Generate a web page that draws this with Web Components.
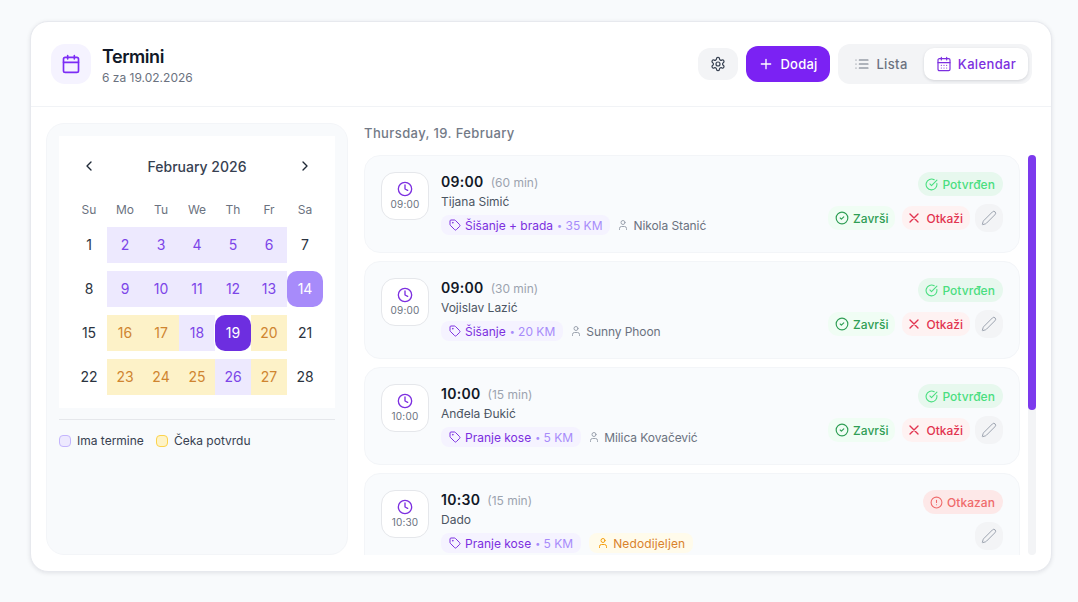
<!DOCTYPE html>
<html lang="bs">
<head>
<meta charset="utf-8">
<title>Termini</title>
<style>
html,body{margin:0;height:100%}
body{background:#f8fafc;font-family:Inter,"Liberation Sans",sans-serif;color:#111827;overflow:hidden}
</style>
</head>
<body>
<termini-app>
  <termini-header slot="header" title-text="Termini" sub="6 za 19.02.2026"></termini-header>
  <mini-calendar slot="side"></mini-calendar>
  <span slot="date">Thursday, 19. February</span>
  <appt-card slot="list" time="09:00" dur="(60 min)" name="Tijana Simić" service="Šišanje + brada" price="35 KM" staff="Nikola Stanić" status="ok"></appt-card>
  <appt-card slot="list" time="09:00" dur="(30 min)" name="Vojislav Lazić" service="Šišanje" price="20 KM" staff="Sunny Phoon" status="ok"></appt-card>
  <appt-card slot="list" time="10:00" dur="(15 min)" name="Anđela Đukić" service="Pranje kose" price="5 KM" staff="Milica Kovačević" status="ok"></appt-card>
  <appt-card slot="list" time="10:30" dur="(15 min)" name="Dado" service="Pranje kose" price="5 KM" staff="Nedodijeljen" status="no" unassigned></appt-card>
</termini-app>
<script>
const P={
 calendar:'<path d="M8 2v4M16 2v4"/><rect x="3" y="4" width="18" height="18" rx="2"/><path d="M3 10h18"/>',
 days:'<path d="M8 2v4M16 2v4"/><rect x="3" y="4" width="18" height="18" rx="2"/><path d="M3 10h18M8 14h.01M12 14h.01M16 14h.01M8 18h.01M12 18h.01M16 18h.01"/>',
 gear:'<path d="M12.22 2h-.44a2 2 0 0 0-2 2v.18a2 2 0 0 1-1 1.73l-.43.25a2 2 0 0 1-2 0l-.15-.08a2 2 0 0 0-2.73.73l-.22.38a2 2 0 0 0 .73 2.73l.15.1a2 2 0 0 1 1 1.72v.51a2 2 0 0 1-1 1.74l-.15.09a2 2 0 0 0-.73 2.73l.22.38a2 2 0 0 0 2.73.73l.15-.08a2 2 0 0 1 2 0l.43.25a2 2 0 0 1 1 1.73V20a2 2 0 0 0 2 2h.44a2 2 0 0 0 2-2v-.18a2 2 0 0 1 1-1.73l.43-.25a2 2 0 0 1 2 0l.15.08a2 2 0 0 0 2.73-.73l.22-.39a2 2 0 0 0-.73-2.73l-.15-.08a2 2 0 0 1-1-1.74v-.5a2 2 0 0 1 1-1.74l.15-.09a2 2 0 0 0 .73-2.73l-.22-.38a2 2 0 0 0-2.73-.73l-.15.08a2 2 0 0 1-2 0l-.43-.25a2 2 0 0 1-1-1.73V4a2 2 0 0 0-2-2z"/><circle cx="12" cy="12" r="3"/>',
 plus:'<path d="M5 12h14M12 5v14"/>',
 list:'<path d="M3 12h.01M3 18h.01M3 6h.01M8 12h13M8 18h13M8 6h13"/>',
 clock:'<circle cx="12" cy="12" r="10"/><path d="M12 6v6l4 2"/>',
 tag:'<path d="M12.586 2.586A2 2 0 0 0 11.172 2H4a2 2 0 0 0-2 2v7.172a2 2 0 0 0 .586 1.414l8.704 8.704a2.426 2.426 0 0 0 3.42 0l6.58-6.58a2.426 2.426 0 0 0 0-3.42z"/><circle cx="7.5" cy="7.5" r=".5" fill="currentColor"/>',
 user:'<path d="M19 21v-2a4 4 0 0 0-4-4H9a4 4 0 0 0-4 4v2"/><circle cx="12" cy="7" r="4"/>',
 checkBig:'<path d="M21.801 10A10 10 0 1 1 17 3.335"/><path d="m9 11 3 3L22 4"/>',
 check:'<circle cx="12" cy="12" r="10"/><path d="m9 12 2 2 4-4"/>',
 x:'<path d="M18 6 6 18M6 6l12 12"/>',
 pencil:'<path d="M21.174 6.812a1 1 0 0 0-3.986-3.987L3.842 16.174a2 2 0 0 0-.5.83l-1.321 4.352a.5.5 0 0 0 .623.622l4.353-1.32a2 2 0 0 0 .83-.497z"/>',
 alert:'<circle cx="12" cy="12" r="10"/><path d="M12 8v4M12 16h.01"/>',
 left:'<path d="m15 18-6-6 6-6"/>',
 right:'<path d="m9 18 6-6-6-6"/>'
};
const ico=(n,s,w=2)=>`<svg width="${s}" height="${s}" viewBox="0 0 24 24" fill="none" stroke="currentColor" stroke-width="${w}" stroke-linecap="round" stroke-linejoin="round" style="flex:none;display:block">${P[n]}</svg>`;

class TerminiApp extends HTMLElement{
 constructor(){super();this.attachShadow({mode:'open'}).innerHTML=`<style>
 :host{display:block;box-sizing:border-box;height:602px;padding:21px 26px 30px 30px}
 .card{box-sizing:border-box;height:551px;background:#fff;border:1px solid #e7e9ee;border-radius:18px;box-shadow:0 1px 4px rgba(15,23,42,.10);display:flex;flex-direction:column;overflow:hidden}
 .main{flex:1;min-height:0;display:flex;gap:16px;padding:16px 15px 16px 15px}
 .side{flex:none;width:302px;display:flex}
 .right{flex:1;min-width:0;display:flex;flex-direction:column}
 .date{height:20px;margin-bottom:12px;font-size:13px;line-height:20px;font-weight:500;color:#737a87;letter-spacing:.4px}
 .wrap{flex:1;min-height:0;display:flex;gap:8px}
 .scroll{flex:1;min-width:0;overflow:hidden;display:flex;flex-direction:column;gap:8px}
 .track{flex:none;width:8px;background:#f3f4f6;border-radius:4px}
 .thumb{height:255px;background:#7c3aed;border-radius:4px}
 </style><div class="card"><slot name="header"></slot><div class="main">
 <div class="side"><slot name="side"></slot></div>
 <div class="right"><div class="date"><slot name="date"></slot></div>
 <div class="wrap"><div class="scroll"><slot name="list"></slot></div><div class="track"><div class="thumb"></div></div></div></div>
 </div></div>`;}
}
class TerminiHeader extends HTMLElement{
 connectedCallback(){if(this.shadowRoot)return;this.attachShadow({mode:'open'}).innerHTML=`<style>
 :host{display:flex;flex:none;box-sizing:border-box;height:85px;align-items:center;padding:0 19px 1px 20px;border-bottom:1px solid #f1f3f6;gap:8px}
 .logo{width:40px;height:40px;border-radius:14px;background:#f5f3ff;color:#7c2df5;display:flex;align-items:center;justify-content:center;margin-right:3px}
 .tt{flex:1;display:flex;flex-direction:column;padding-top:4px}
 h1{margin:0;font-size:18px;line-height:24px;font-weight:600;color:#111827;letter-spacing:-.45px}
 p{margin:0;font-size:12px;line-height:18px;color:#6b7280}
 button{font:inherit;border:0;padding:0;display:flex;align-items:center;justify-content:center}
 .gear{width:40px;height:32px;border-radius:12px;background:#f3f4f6;color:#374151}
 .add{width:84px;height:36px;border-radius:12px;background:#7b22f3;color:#fff;font-size:13px;font-weight:500;gap:6px;letter-spacing:.25px}
 .seg{display:flex;gap:4px;height:40px;box-sizing:border-box;padding:4px;background:#f3f4f6;border-radius:12px}
 .seg button{height:32px;border-radius:10px;font-size:13px;font-weight:500;gap:6px;background:transparent;color:#6b7280;letter-spacing:.35px}
 .l{width:78px}
 .seg .k{width:104px;background:#fff;color:#7c2fe0;box-shadow:0 1px 3px rgba(15,23,42,.14)}
 </style>
 <div class="logo">${ico('calendar',20)}</div>
 <div class="tt"><h1>${this.getAttribute('title-text')}</h1><p>${this.getAttribute('sub')}</p></div>
 <button class="gear">${ico('gear',16,1.8)}</button>
 <button class="add">${ico('plus',16)}<span>Dodaj</span></button>
 <div class="seg"><button class="l">${ico('list',16,1.8)}<span>Lista</span></button><button class="k">${ico('days',16,1.8)}<span>Kalendar</span></button></div>`;}
}
class MiniCalendar extends HTMLElement{
 connectedCallback(){if(this.shadowRoot)return;
 const st={2:'r',3:'r',4:'r',5:'r',6:'r',9:'r',10:'r',11:'r',12:'r',13:'r',14:'s',16:'y',17:'y',18:'r',19:'t',20:'y',23:'y',24:'y',25:'y',26:'r',27:'y'};
 let cells='';for(let d=1;d<=28;d++)cells+=`<div class="c ${st[d]||''}">${d}</div>`;
 this.attachShadow({mode:'open'}).innerHTML=`<style>
 :host{display:block;box-sizing:border-box;width:100%;background:#f8fafc;border:1px solid #f3f5f8;border-radius:18px;padding:12px}
 .box{background:#fff;padding:12px 12px 13px;height:272px;box-sizing:border-box}
 .nav{display:flex;align-items:center;justify-content:space-between;height:36px;margin-bottom:17px;padding:0 10px}
 .nav b{font-size:14px;font-weight:500;color:#374151}
 .nav span{color:#1f2937}
 .g{display:grid;grid-template-columns:repeat(7,36px);row-gap:8px}
 .h{height:18px;line-height:18px;text-align:center;font-size:12px;color:#6b7280}
 .c{height:36px;line-height:36px;text-align:center;font-size:14px;color:#2b3340}
 .r{background:#ede9fe;color:#7c45e8}
 .y{background:#fdf2c8;color:#cf8530}
 .s{background:#a78bfa;color:#fff;border-radius:10px}
 .t{background:#6d2ee0;color:#fff;border-radius:10px;box-shadow:0 0 0 1px #fff}
 hr{border:0;border-top:1px solid #e5e7eb;margin:11px 0 12px}
 .leg{display:flex;gap:12px;font-size:12px;color:#374151;line-height:18px}
 .leg div{display:flex;align-items:center;gap:6px}
 i{display:block;box-sizing:border-box;width:12px;height:12px;border-radius:4px}
 .a{background:#ede9fe;border:1px solid #c4b5fd}.b{background:#fef3c7;border:1px solid #fcd34d}
 </style><div class="box">
 <div class="nav"><span>${ico('left',16)}</span><b>February 2026</b><span>${ico('right',16)}</span></div>
 <div class="g">${['Su','Mo','Tu','We','Th','Fr','Sa'].map(x=>`<div class="h">${x}</div>`).join('')}${cells}</div></div>
 <hr><div class="leg"><div><i class="a"></i>Ima termine</div><div><i class="b"></i>Čeka potvrdu</div></div>`;}
}
class ApptCard extends HTMLElement{
 connectedCallback(){if(this.shadowRoot)return;
 const a=n=>this.getAttribute(n),ok=a('status')==='ok',un=this.hasAttribute('unassigned');
 this.attachShadow({mode:'open'}).innerHTML=`<style>
 :host{display:flex;flex:none;box-sizing:border-box;height:98px;background:#f9fbfd;border:1px solid #f3f5f8;border-radius:16px;padding:16px;gap:12px}
 .clk{flex:none;box-sizing:border-box;width:48px;height:48px;background:#fff;border:1px solid #e5e7eb;border-radius:14px;display:flex;flex-direction:column;align-items:center;justify-content:center;color:#7c2fe0;padding-bottom:1px}
 .clk span{font-size:10px;line-height:14px;color:#6b7280;letter-spacing:.2px}
 .mid{flex:1;min-width:0}
 .t{display:flex;align-items:baseline;gap:7px;height:20px;line-height:20px}
 .t b{font-size:14px;font-weight:600;color:#111827;letter-spacing:.3px}
 .t span{font-size:12px;color:#9ca3af}
 .n{font-size:12px;line-height:16px;margin-top:2px;color:#4b5563}
 .row{display:flex;align-items:center;gap:7px;margin-top:5px;height:20px;font-size:12px}
 .chip{display:flex;align-items:center;gap:4px;height:20px;padding:0 8px;background:#f5f3ff;border-radius:8px;color:#7c2fe0;white-space:nowrap}
 .chip em{font-style:normal;color:#a78bfa}
 .chip em i{font-style:normal;font-size:9px;vertical-align:1px}
 .staff{display:flex;align-items:center;gap:4px;color:#6b7280;letter-spacing:-.08px}
 .staff svg{color:#9ca3af}
 .un{height:20px;padding:0 8px;margin-left:1px;background:#fffbeb;color:#d9822b;border-radius:8px;letter-spacing:.12px}
 .un svg{color:#f59e0b}
 .side{flex:none;display:flex;flex-direction:column;align-items:flex-end;justify-content:space-between;height:60px;font-size:12px}
 .badge{display:flex;align-items:center;gap:4px;height:24px;padding:0 8px 0 7px;border-radius:12px;font-weight:500;letter-spacing:.05px;white-space:nowrap}
 .ok{background:#e7f8ee;color:#4ade80}
 .no{background:#fde8e8;color:#ef6b6b}
 .act{display:flex;gap:5px;align-items:center;height:28px}
 .btn{display:flex;align-items:center;gap:4px;height:24px;padding:0 7px;border-radius:10px;font-weight:500;white-space:nowrap}
 .z{background:#f0fdf4;color:#2f9e55}
 .o{background:#fef2f2;color:#e2334f;padding-left:4px;margin-left:2px}
 .p{width:28px;height:28px;box-sizing:border-box;padding:0;justify-content:center;background:#f3f4f6;color:#9ca3af;border-radius:12px}
 </style>
 <div class="clk">${ico('clock',16)}<span>${a('time')}</span></div>
 <div class="mid"><div class="t"><b>${a('time')}</b><span>${a('dur')}</span></div>
 <div class="n">${a('name')}</div>
 <div class="row"><div class="chip">${ico('tag',12,2)}<span>${a('service')}</span><em><i>•</i> ${a('price')}</em></div>
 <div class="staff ${un?'un':''}">${ico('user',12)}<span>${a('staff')}</span></div></div></div>
 <div class="side">${ok?`<div class="badge ok">${ico('checkBig',13)}Potvrđen</div>`:`<div class="badge no">${ico('alert',13)}Otkazan</div>`}
 <div class="act">${ok?`<div class="btn z">${ico('check',14)}Završi</div><div class="btn o">${ico('x',16)}Otkaži</div>`:''}<div class="btn p">${ico('pencil',16,1.5)}</div></div></div>`;}
}
customElements.define('termini-app',TerminiApp);
customElements.define('termini-header',TerminiHeader);
customElements.define('mini-calendar',MiniCalendar);
customElements.define('appt-card',ApptCard);
</script>
</body>
</html>
